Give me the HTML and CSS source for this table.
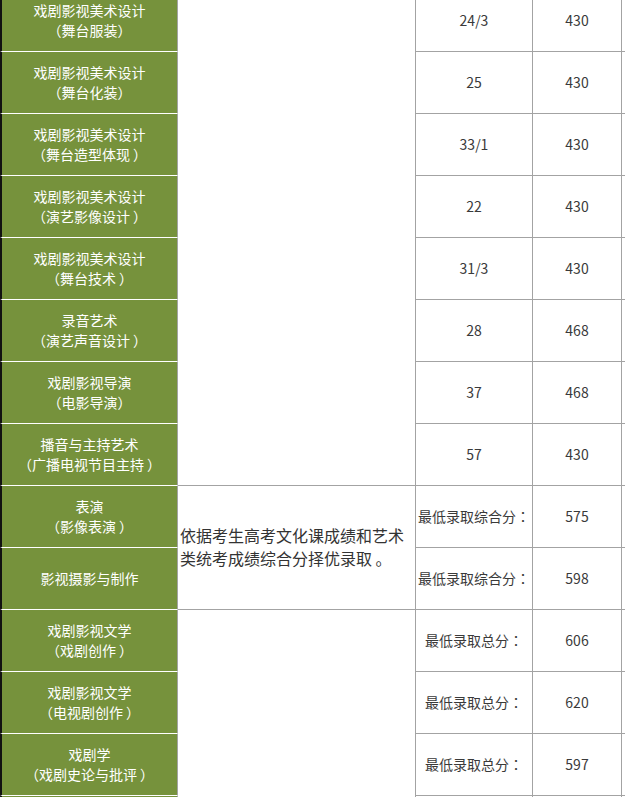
FILE: index.html
```html
<!DOCTYPE html>
<html lang="zh-CN">
<head>
<meta charset="utf-8">
<title>录取分数</title>
<link rel="stylesheet" href="styles.css">
</head>
<body>
<div class="viewport">
<table class="scores">
  <colgroup>
    <col class="c1"><col class="c2"><col class="c3"><col class="c4"><col class="c5">
  </colgroup>
  <tbody>
    <tr>
      <td class="major">戏剧影视美术设计<br>（舞台服装）</td>
      <td class="blank" rowspan="8"></td>
      <td class="num">24/3</td>
      <td class="num">430</td>
      <td class="extra"></td>
    </tr>
    <tr>
      <td class="major">戏剧影视美术设计<br>（舞台化装）</td>
      <td class="num">25</td>
      <td class="num">430</td>
      <td class="extra"></td>
    </tr>
    <tr>
      <td class="major">戏剧影视美术设计<br>（舞台造型体现 ）</td>
      <td class="num">33/1</td>
      <td class="num">430</td>
      <td class="extra"></td>
    </tr>
    <tr>
      <td class="major">戏剧影视美术设计<br>（演艺影像设计 ）</td>
      <td class="num">22</td>
      <td class="num">430</td>
      <td class="extra"></td>
    </tr>
    <tr>
      <td class="major">戏剧影视美术设计<br>（舞台技术 ）</td>
      <td class="num">31/3</td>
      <td class="num">430</td>
      <td class="extra"></td>
    </tr>
    <tr>
      <td class="major">录音艺术<br>（演艺声音设计 ）</td>
      <td class="num">28</td>
      <td class="num">468</td>
      <td class="extra"></td>
    </tr>
    <tr>
      <td class="major">戏剧影视导演<br>（电影导演）</td>
      <td class="num">37</td>
      <td class="num">468</td>
      <td class="extra"></td>
    </tr>
    <tr>
      <td class="major">播音与主持艺术<br>（广播电视节目主持 ）</td>
      <td class="num">57</td>
      <td class="num">430</td>
      <td class="extra"></td>
    </tr>
    <tr>
      <td class="major">表演<br>（影像表演 ）</td>
      <td class="rule" rowspan="2">依据考生高考文化课成绩和艺术类统考成绩综合分择优录取 。</td>
      <td class="num">最低录取综合分<span class="colon" lang="zh-TW">：</span></td>
      <td class="num">575</td>
      <td class="extra"></td>
    </tr>
    <tr>
      <td class="major">影视摄影与制作</td>
      <td class="num">最低录取综合分<span class="colon" lang="zh-TW">：</span></td>
      <td class="num">598</td>
      <td class="extra"></td>
    </tr>
    <tr>
      <td class="major">戏剧影视文学<br>（戏剧创作 ）</td>
      <td class="blank" rowspan="4"></td>
      <td class="num">最低录取总分<span class="colon" lang="zh-TW">：</span></td>
      <td class="num">606</td>
      <td class="extra"></td>
    </tr>
    <tr>
      <td class="major">戏剧影视文学<br>（电视剧创作 ）</td>
      <td class="num">最低录取总分<span class="colon" lang="zh-TW">：</span></td>
      <td class="num">620</td>
      <td class="extra"></td>
    </tr>
    <tr>
      <td class="major">戏剧学<br>（戏剧史论与批评 ）</td>
      <td class="num">最低录取总分<span class="colon" lang="zh-TW">：</span></td>
      <td class="num">597</td>
      <td class="extra"></td>
    </tr>
    <tr>
      <td class="major"></td>
      <td class="num"></td>
      <td class="num"></td>
      <td class="extra"></td>
    </tr>
  </tbody>
</table>
</div>
</body>
</html>
```
FILE: styles.css
```css
html, body {
  margin: 0;
  padding: 0;
  background: #ffffff;
}

.viewport {
  width: 625px;
  height: 797px;
  overflow: hidden;
}

.scores {
  margin-top: -10px;
  border-collapse: separate;
  border-spacing: 0;
  table-layout: fixed;
  width: 722px;
  font-family: "Noto Sans CJK SC", "Noto Sans", sans-serif;
  font-size: 14px;
  line-height: 20px;
  color: #333333;
}

.c1 { width: 178px; }
.c2 { width: 238px; }
.c3 { width: 117px; }
.c4 { width: 89px; }
.c5 { width: 100px; }

.scores td {
  box-sizing: border-box;
  height: 62px;
  padding: 0 0 2px 0;
  border-right: 1px solid #a3a3a3;
  border-bottom: 1px solid #a3a3a3;
  text-align: center;
  vertical-align: middle;
  white-space: nowrap;
}

.scores td.major {
  background: #76923c;
  color: #ffffff;
  border-left: 2px solid #111111;
  border-bottom: 1px solid #ffffff;
}

.scores td.rule {
  white-space: normal;
  text-align: left;
  padding: 0 0 2px 2px;
  font-size: 16px;
  line-height: 23px;
  color: #333333;
}

.scores td.num {
  color: #3a3a3a;
}

.colon {
  font-family: "Noto Sans CJK TC", "Noto Sans CJK SC", sans-serif;
}
```
